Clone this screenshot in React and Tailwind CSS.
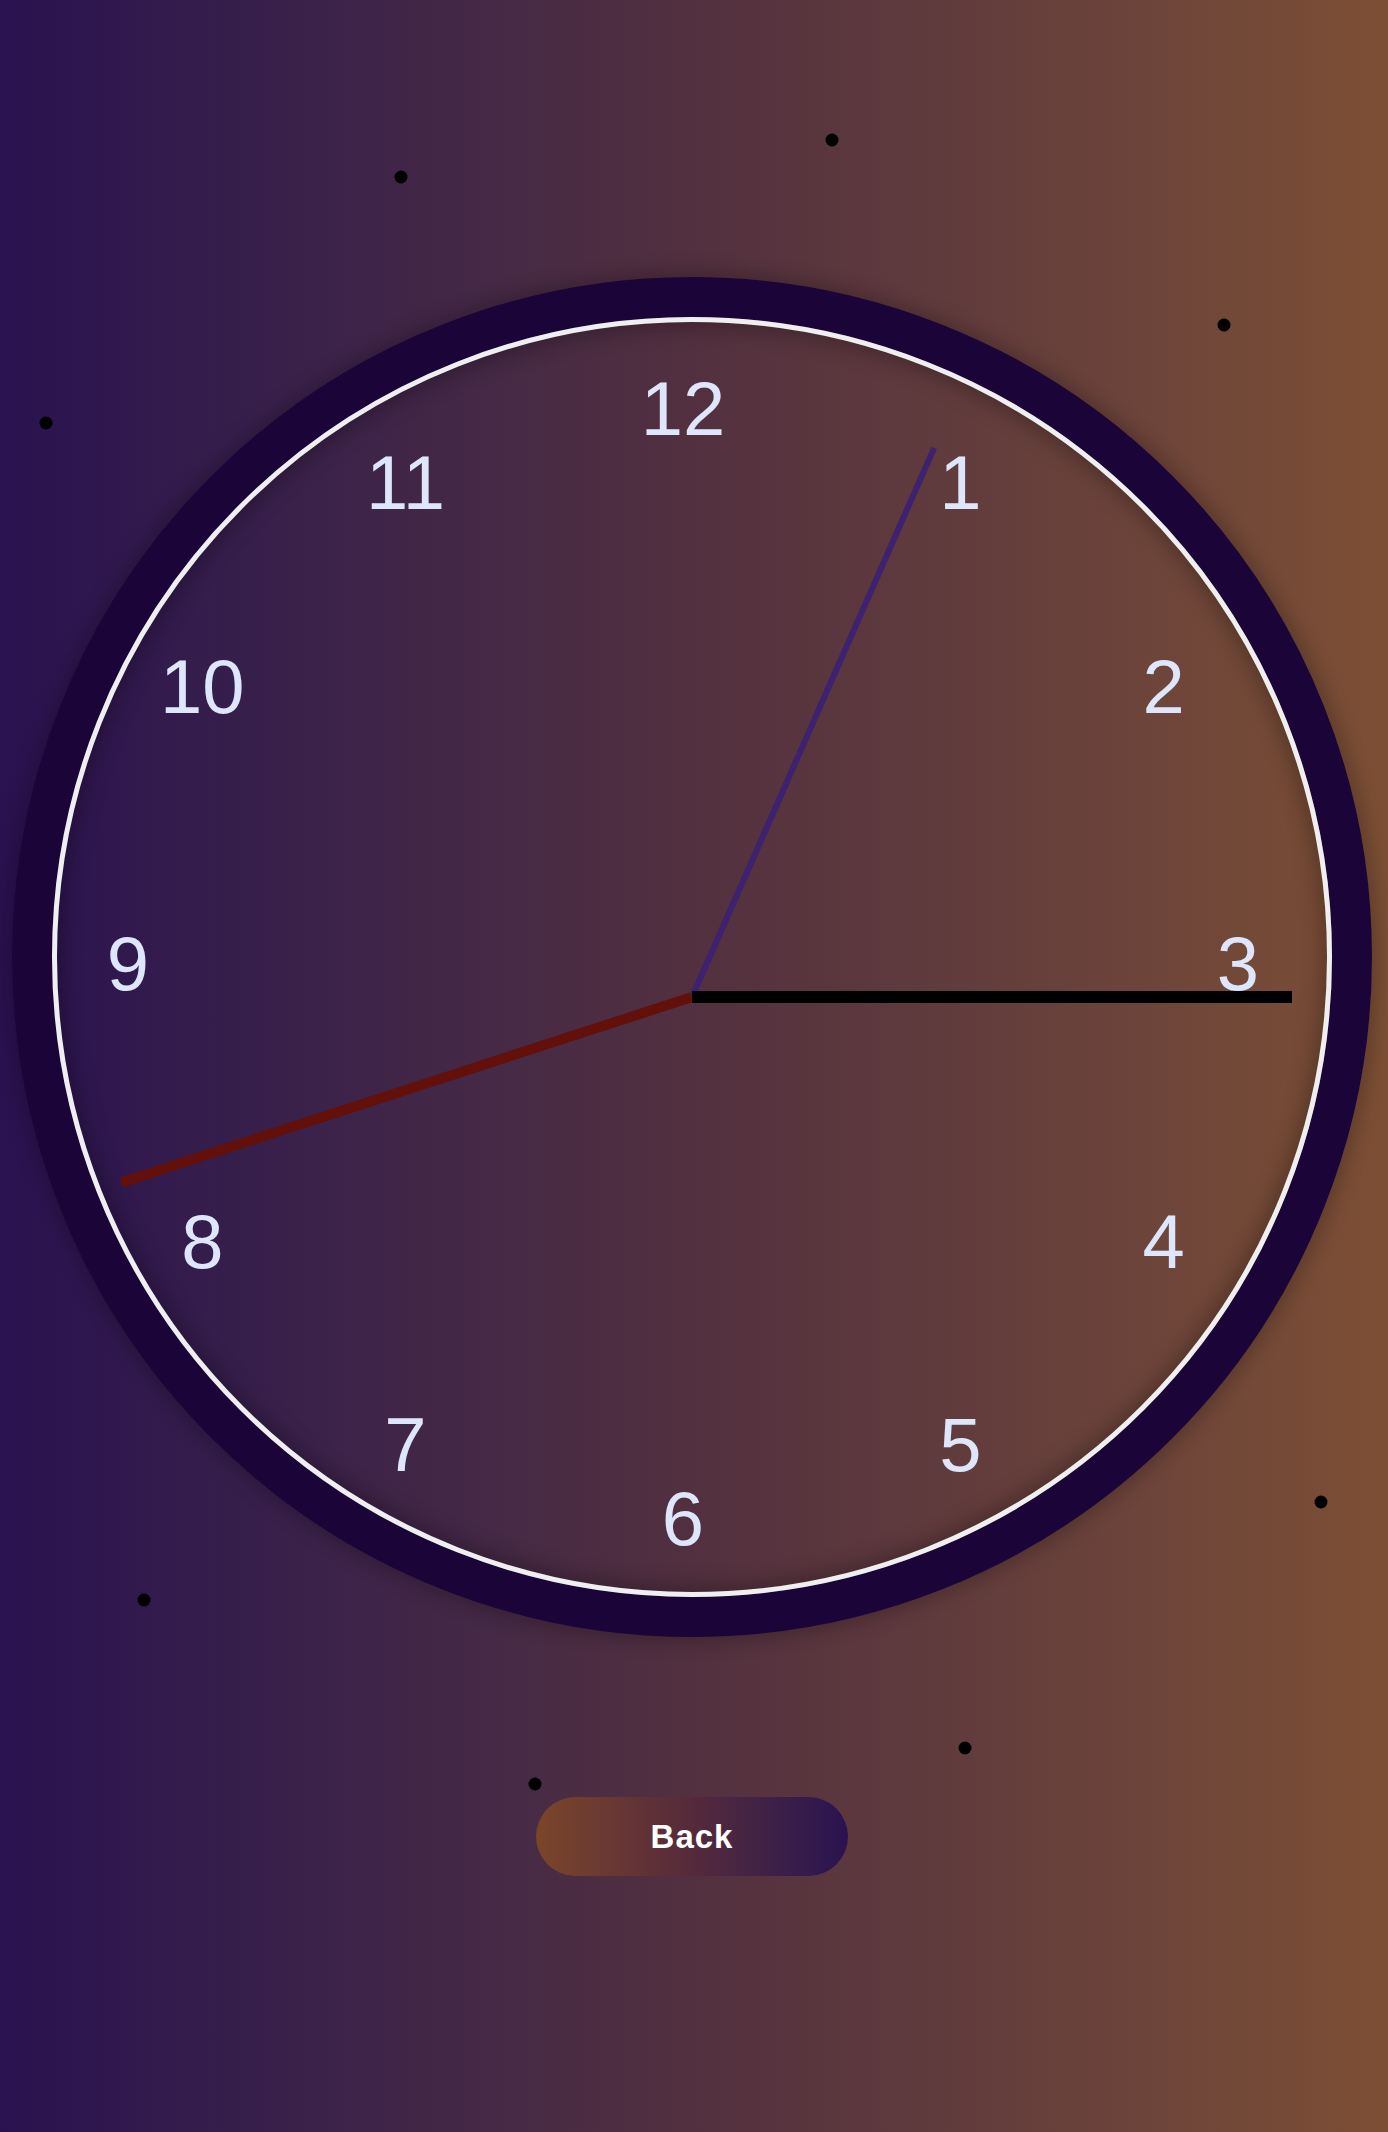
import React from "react";

const dots = [
  [401, 177],
  [832, 140],
  [1224, 325],
  [46, 423],
  [1321, 1502],
  [144, 1600],
  [965, 1748],
  [535, 1784],
];

const numbers = [12, 1, 2, 3, 4, 5, 6, 7, 8, 9, 10, 11];

export default function App() {
  const cx = 671;
  const cy = 687;
  const r = 555;
  return (
    <div
      className="relative w-full min-h-[2132px] overflow-hidden bg-gradient-to-r from-[#2a1150] via-[#52303f] to-[#7c4f34]"
      style={{ fontFamily: '"Liberation Sans", Arial, sans-serif' }}
    >
      {dots.map(([x, y], i) => (
        <div
          key={i}
          className="absolute w-[13px] h-[13px] rounded-full bg-black -translate-x-1/2 -translate-y-1/2"
          style={{ left: x, top: y }}
        />
      ))}
      <div className="flex flex-col items-center pt-[277px] pr-[4px]">
        <div className="relative w-[1360px] h-[1360px] rounded-full border-[40px] border-[#1b0538] shadow-[0_0_18px_6px_rgba(0,0,0,0.22)]">
          <div className="w-full h-full rounded-full border-[5px] border-[#efeff2] shadow-[inset_0_0_22px_4px_rgba(0,0,0,0.3)]" />
          <div className="absolute -left-[40px] -top-[40px] w-[1360px] h-[1360px]">
            {numbers.map((n, i) => {
              const a = (i * 30 * Math.PI) / 180;
              const x = cx + r * Math.sin(a);
              const y = cy - r * Math.cos(a);
              return (
                <div
                  key={n}
                  className="absolute -translate-x-1/2 -translate-y-1/2 text-[76px] leading-none text-[#dde6fb]"
                  style={{ left: x, top: y }}
                >
                  {n}
                </div>
              );
            })}
            <svg
              className="absolute left-0 top-0"
              width="1360"
              height="1360"
              viewBox="0 0 1360 1360"
            >
              <line
                x1="680"
                y1="720"
                x2={680 + 600 * Math.cos((-66.2 * Math.PI) / 180)}
                y2={720 + 600 * Math.sin((-66.2 * Math.PI) / 180)}
                stroke="#3e2170"
                strokeWidth="6"
              />
              <line
                x1="680"
                y1="720"
                x2={680 + 600 * Math.cos((162 * Math.PI) / 180)}
                y2={720 + 600 * Math.sin((162 * Math.PI) / 180)}
                stroke="#621009"
                strokeWidth="10"
              />
              <line x1="680" y1="720" x2="1280" y2="720" stroke="#000" strokeWidth="12" />
            </svg>
          </div>
        </div>
        <button className="mt-[160px] w-[312px] h-[79px] rounded-full bg-gradient-to-r from-[#7b4528] via-[#552a3a] to-[#2a1250] text-white font-bold text-[33px] tracking-[1px]">
          Back
        </button>
      </div>
    </div>
  );
}
